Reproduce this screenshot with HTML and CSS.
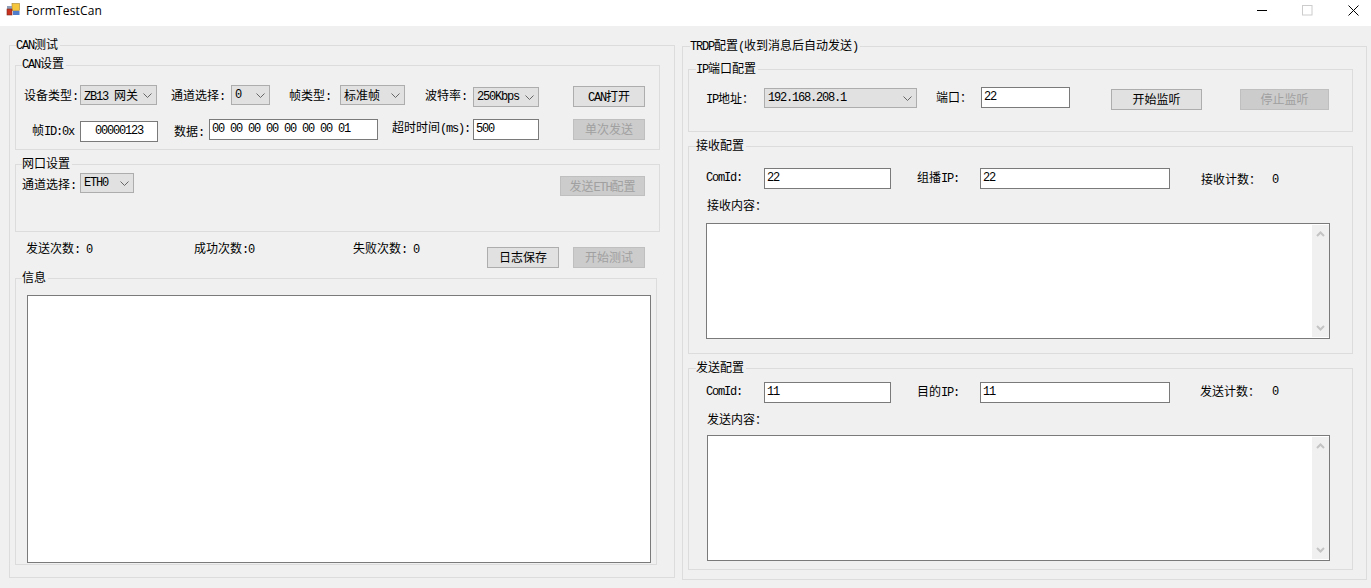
FILE: index.html
```html
<!DOCTYPE html>
<html lang="zh-CN">
<head>
  <meta charset="UTF-8">
  <title>FormTestCan</title>
  <link rel="stylesheet" href="styles.css">
</head>
<body>
  <div class="titlebar">
    <svg class="app-icon" width="14" height="14" viewBox="0 0 14 14">
      <rect x="6" y="0.5" width="7.5" height="7" fill="#f5c63c" stroke="#a8842a" stroke-width="0.6"/>
      <rect x="1" y="3" width="5" height="3" fill="#8f9fb8"/>
      <rect x="1" y="6" width="5" height="6" fill="#c8321e" stroke="#7d2a1e" stroke-width="0.6"/>
      <rect x="7" y="8" width="6.5" height="4" fill="#4f7ccb"/>
    </svg>
    <span class="title-text">FormTestCan</span>
    <div class="win-buttons">
      <svg width="11" height="11" viewBox="0 0 11 11"><path d="M1 5.5H11" stroke="#000" fill="none"/></svg>
      <svg width="11" height="11" viewBox="0 0 11 11"><rect x="0.5" y="0.5" width="9.5" height="9.5" stroke="#ccc" fill="none"/></svg>
      <svg width="11" height="11" viewBox="0 0 11 11"><path d="M0.5 0.5L10.5 10.5M10.5 0.5L0.5 10.5" stroke="#000" fill="none"/></svg>
    </div>
  </div>

  <div class="client">
    <div class="group can-test">
      <span class="legend"><span class="en">CAN</span>测试</span>

      <div class="group can-setup">
        <span class="legend legend-high"><span class="en">CAN</span>设置</span>
        <div class="row can-row1">
          <span class="lbl l-device">设备类型<span class="en">:</span></span>
          <div class="combo c-device"><span class="en">ZB13 </span>网关<svg width="9" height="5" viewBox="0 0 9 5"><path d="M0.5 0.5L4.5 4.5L8.5 0.5" stroke="#666" fill="none"/></svg></div>
          <span class="lbl l-channel">通道选择<span class="en">:</span></span>
          <div class="combo c-channel"><span class="en">0</span><svg width="9" height="5" viewBox="0 0 9 5"><path d="M0.5 0.5L4.5 4.5L8.5 0.5" stroke="#666" fill="none"/></svg></div>
          <span class="lbl l-frame">帧类型<span class="en">:</span></span>
          <div class="combo c-frame">标准帧<svg width="9" height="5" viewBox="0 0 9 5"><path d="M0.5 0.5L4.5 4.5L8.5 0.5" stroke="#666" fill="none"/></svg></div>
          <span class="lbl l-baud">波特率<span class="en">:</span></span>
          <div class="combo c-baud"><span class="en">250Kbps</span><svg width="9" height="5" viewBox="0 0 9 5"><path d="M0.5 0.5L4.5 4.5L8.5 0.5" stroke="#666" fill="none"/></svg></div>
          <button class="btn b-can">
            <span class="en">CAN</span>打开
          </button>
        </div>
        <div class="row can-row2">
          <span class="lbl l-id">帧<span class="en">ID:0x</span></span>
          <div class="edit en e-id">00000123</div>
          <span class="lbl l-data">数据<span class="en">:</span></span>
          <div class="edit en e-data">00 00 00 00 00 00 00 01</div>
          <span class="lbl l-timeout">超时时间<span class="en">(ms):</span></span>
          <div class="edit en e-timeout">500</div>
          <button class="btn b-single" disabled>单次发送</button>
        </div>
      </div>

      <div class="group net-setup">
        <span class="legend">网口设置</span>
        <div class="row">
          <span class="lbl l-netchan">通道选择<span class="en">:</span></span>
          <div class="combo c-eth"><span class="en">ETH0</span><svg width="9" height="5" viewBox="0 0 9 5"><path d="M0.5 0.5L4.5 4.5L8.5 0.5" stroke="#666" fill="none"/></svg></div>
          <button class="btn b-eth" disabled>发送<span class="en">ETH</span>配置</button>
        </div>
      </div>

      <div class="row stats">
        <span class="lbl s-send">发送次数<span class="en">: 0</span></span>
        <span class="lbl s-ok">成功次数<span class="en">:0</span></span>
        <span class="lbl s-fail">失败次数<span class="en">: 0</span></span>
        <button class="btn b-log">日志保存</button>
        <button class="btn b-start" disabled>开始测试</button>
      </div>

      <div class="group info">
        <span class="legend">信息</span>
        <div class="memo memo-info"></div>
      </div>
    </div>

    <div class="group trdp">
      <span class="legend legend-trdp"><span class="en">TRDP</span>配置<span class="en">(</span>收到消息后自动发送<span class="en">)</span></span>

      <div class="group ip-setup">
        <span class="legend legend-inner"><span class="en">IP</span>端口配置</span>
        <div class="row">
          <span class="lbl l-ip"><span class="en">IP</span>地址：</span>
          <div class="combo c-ip"><span class="en">192.168.208.1</span><svg width="9" height="5" viewBox="0 0 9 5"><path d="M0.5 0.5L4.5 4.5L8.5 0.5" stroke="#666" fill="none"/></svg></div>
          <span class="lbl l-port">端口：</span>
          <div class="edit en e-port">22</div>
          <button class="btn b-listen">开始监听</button>
          <button class="btn b-stop" disabled>停止监听</button>
        </div>
      </div>

      <div class="group recv">
        <span class="legend legend-inner">接收配置</span>
        <div class="row">
          <span class="lbl l-comid en">ComId:</span>
          <div class="edit en e-comid">22</div>
          <span class="lbl l-peer">组播<span class="en">IP:</span></span>
          <div class="edit en e-peer">22</div>
          <span class="lbl l-recvcount">接收计数：</span>
          <span class="lbl en n-recv">0</span>
        </div>
        <div class="lbl l-content">接收内容：</div>
        <div class="memo memo-recv">
          <div class="vscroll">
            <svg width="9" height="6" viewBox="0 0 9 6"><path d="M1 5L4.5 1.5L8 5" stroke="#c4c4c4" stroke-width="2" fill="none"/></svg>
            <svg width="9" height="6" viewBox="0 0 9 6"><path d="M1 1L4.5 4.5L8 1" stroke="#c4c4c4" stroke-width="2" fill="none"/></svg>
          </div>
        </div>
      </div>

      <div class="group send">
        <span class="legend legend-inner">发送配置</span>
        <div class="row">
          <span class="lbl l-comid en">ComId:</span>
          <div class="edit en e-comid">11</div>
          <span class="lbl l-peer">目的<span class="en">IP:</span></span>
          <div class="edit en e-peer">11</div>
          <span class="lbl l-sendcount">发送计数：</span>
          <span class="lbl en n-send">0</span>
        </div>
        <div class="lbl l-content">发送内容：</div>
        <div class="memo memo-send">
          <div class="vscroll">
            <svg width="9" height="6" viewBox="0 0 9 6"><path d="M1 5L4.5 1.5L8 5" stroke="#c4c4c4" stroke-width="2" fill="none"/></svg>
            <svg width="9" height="6" viewBox="0 0 9 6"><path d="M1 1L4.5 4.5L8 1" stroke="#c4c4c4" stroke-width="2" fill="none"/></svg>
          </div>
        </div>
      </div>
    </div>
  </div>
</body>
</html>
```

FILE: styles.css
```css
* {
  box-sizing: border-box;
}
html, body {
  height: 100%;
}
body {
  margin: 0;
  overflow: hidden;
  background: #f0f0f0;
  color: #000;
  font-family: "Noto Sans CJK SC", "Liberation Sans", sans-serif;
  font-size: 12px;
}
.en {
  font-family: "Liberation Mono", "Noto Sans CJK SC", monospace;
  letter-spacing: -1.2px;
}

/* window chrome */
.titlebar {
  display: flex;
  align-items: center;
  height: 26px;
  padding: 0 12px 6px 6px;
  background: #fff;
}
.title-text {
  margin-left: 6px;
  font-family: "Open Sans", sans-serif;
  font-size: 12px;
  letter-spacing: 0.15px;
}
.win-buttons {
  display: flex;
  gap: 35px;
  margin-left: auto;
}

/* group boxes */
.client {
  display: flex;
  align-items: flex-start;
  padding: 19px 0 0 9px;
}
.group {
  position: relative;
  border: 1px solid #dcdcdc;
}
.legend {
  position: absolute;
  top: -10px;
  left: 6px;
  padding-right: 2px;
  background: #f0f0f0;
  line-height: 16px;
  white-space: nowrap;
}
.legend-high {
  top: -11px;
}
.legend-inner {
  left: 7px;
}
.legend-trdp {
  left: 7px;
}
.can-test {
  width: 666px;
  height: 533px;
  padding: 19px 0 0 5px;
}
.can-setup {
  width: 645px;
  height: 85px;
  padding: 19px 0 0 8px;
}
.net-setup {
  width: 645px;
  height: 68px;
  margin-top: 14px;
  padding: 8px 0 0 6px;
}
.info {
  width: 642px;
  height: 287px;
  margin-top: 10px;
  padding: 16px 0 0 11px;
}
.trdp {
  width: 685px;
  height: 534px;
  margin: 1px 0 0 7px;
  padding: 22px 0 0 5px;
}
.ip-setup {
  width: 665px;
  height: 63px;
  padding: 17px 0 0 17px;
}
.recv {
  width: 665px;
  height: 208px;
  margin-top: 14px;
  padding: 21px 0 0 17px;
}
.send {
  width: 665px;
  height: 202px;
  margin-top: 14px;
  padding: 13px 0 0 17px;
}

/* rows and controls */
.row {
  display: flex;
  align-items: flex-start;
}
.can-row2 {
  margin-top: 12px;
}
.stats {
  margin: 8px 0 0 11px;
}
.lbl {
  flex: none;
  line-height: 16px;
  white-space: nowrap;
}
.combo {
  flex: none;
  display: flex;
  align-items: baseline;
  height: 20px;
  padding: 0 3px;
  border: 1px solid #adadad;
  background: #e1e1e1;
  line-height: 18px;
  white-space: pre;
}
.combo svg {
  flex: none;
  align-self: center;
  margin-left: auto;
  margin-right: 1px;
}
.edit {
  flex: none;
  height: 21px;
  padding: 0 2px;
  border: 1px solid #7a7a7a;
  background: #fff;
  line-height: 18px;
  white-space: pre;
}
.btn {
  flex: none;
  height: 21px;
  padding: 0 0 2px;
  border: 1px solid #adadad;
  background: #e1e1e1;
  color: #000;
  font: inherit;
  line-height: 17px;
}
.btn:disabled {
  border-color: #bfbfbf;
  background: #ccc;
  color: #a0a0a0;
}
.memo {
  display: flex;
  justify-content: flex-end;
  padding: 1px 0;
  border: 1px solid #7a7a7a;
  background: #fff;
}
.vscroll {
  display: flex;
  flex-direction: column;
  justify-content: space-between;
  align-items: center;
  width: 17px;
  padding: 6px 0;
  background: #f0f0f0;
}
.memo-info {
  width: 624px;
  height: 268px;
}
.memo-recv {
  width: 624px;
  height: 116px;
  margin: 10px 0 0 0;
}
.memo-send {
  width: 623px;
  height: 126px;
  margin: 8px 0 0 1px;
}

/* CAN settings */
.l-device { width: 56px; margin-top: 2px; }
.c-device { width: 77px; }
.l-channel { width: 60px; margin: 2px 0 0 14px; }
.c-channel { width: 39px; }
.l-frame { width: 51px; margin: 2px 0 0 19px; }
.c-frame { width: 65px; }
.l-baud { width: 48px; margin: 2px 0 0 20px; }
.c-baud { width: 66px; margin-top: 2px; }
.b-can { width: 72px; margin: 1px 0 0 34px; }
.l-id { width: 48px; margin: 3px 0 0 8px; }
.e-id { width: 78px; margin-top: 2px; text-align: center; }
.l-data { width: 35px; margin: 4px 0 0 16px; }
.e-data { width: 169px; }
.l-timeout { width: 81px; margin-left: 14px; }
.e-timeout { width: 66px; }
.b-single { width: 72px; margin-left: 34px; }

/* network settings */
.l-netchan { width: 58px; margin-top: 3px; }
.c-eth { width: 54px; }
.b-eth { width: 85px; height: 20px; margin: 3px 0 0 426px; }

/* counters */
.s-send { width: 168px; }
.s-ok { width: 159px; }
.s-fail { width: 134px; }
.b-log { width: 72px; margin-top: 7px; }
.b-start { width: 72px; margin: 7px 0 0 14px; }

/* TRDP */
.l-ip { width: 58px; margin-top: 3px; }
.c-ip { width: 153px; margin-top: 1px; }
.l-port { width: 45px; margin: 2px 0 0 19px; }
.e-port { width: 89px; }
.b-listen { width: 91px; margin: 2px 0 0 41px; }
.b-stop { width: 89px; margin: 2px 0 0 38px; }
.l-comid { width: 58px; margin-top: 2px; }
.e-comid { width: 127px; }
.l-peer { width: 63px; margin: 1px 0 0 26px; }
.e-peer { width: 190px; }
.l-recvcount { width: 71px; margin: 3px 0 0 31px; }
.n-recv { margin-top: 4px; }
.l-sendcount { width: 72px; margin: 1px 0 0 30px; }
.n-send { margin-top: 2px; }
.l-content { margin: 8px 0 0 1px; }
```
